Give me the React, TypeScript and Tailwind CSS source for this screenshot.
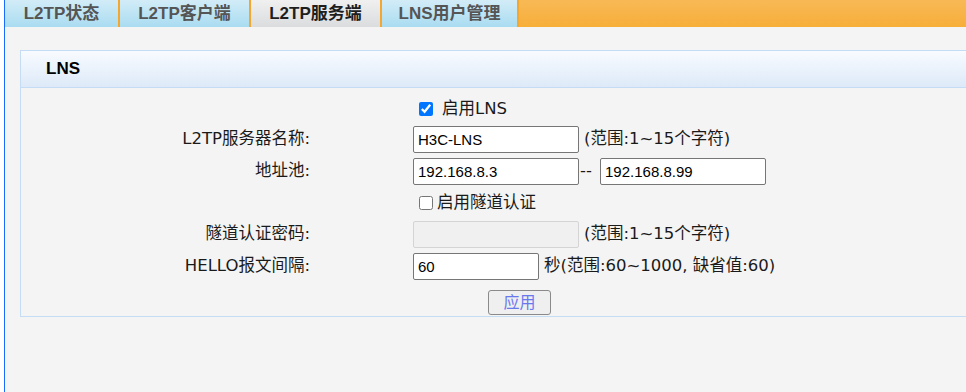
export default function App() {
  const tabs = [
    { label: "L2TP状态", w: "w-[113px]", active: false },
    { label: "L2TP客户端", w: "w-[129px]", active: false },
    { label: "L2TP服务端", w: "w-[129px]", active: true },
    { label: "LNS用户管理", w: "w-[135px]", active: false },
  ]

  const sans = { fontFamily: '"Liberation Sans", "Noto Sans CJK SC", sans-serif' }
  const wide = { fontFamily: '"DejaVu Sans", "Noto Sans CJK SC", sans-serif' }

  return (
    <div className="w-[966px] h-[392px] overflow-hidden bg-white flex" style={sans}>
      <div className="w-[4px] shrink-0 bg-white" />
      <div className="w-[1px] shrink-0 bg-[#1a6cff]" />
      <div className="flex-1 flex flex-col min-w-0">
        {/* tab bar */}
        <div className="h-[27px] flex bg-gradient-to-b from-[#f8b955] to-[#f7ae38]">
          {tabs.map((t) => (
            <div key={t.label} className="flex">
              <div
                className={`${t.w} h-full flex items-center justify-center text-[17px] font-bold ${
                  t.active
                    ? "bg-gradient-to-b from-[#f0f0f0] to-[#dadcde] text-[#1e1e1e]"
                    : "bg-gradient-to-b from-[#d2ecf7] to-[#a9dcf1] text-[#555555]"
                }`}
              >
                {t.label}
              </div>
              <div className="w-[2px] h-full bg-[#f5a62e]" />
            </div>
          ))}
        </div>

        {/* content */}
        <div className="flex-1 bg-[#f4f4f4] pl-[15px] pt-[23px]">
          <div className="w-[980px] border border-[#c5dcf5]">
            <div className="h-[37px] flex items-center pl-[25px] bg-gradient-to-b from-[#f8fbff] to-[#dde9f8] border-b border-[#c5dcf5] text-[17px] font-bold text-black">
              LNS
            </div>
            <div className="pt-[7px] pb-[1px] text-[16.5px] text-[#1a1a1a]" style={wide}>
              {/* enable LNS */}
              <div className="h-[28px] flex items-center">
                <div className="w-[392px]" />
                <input type="checkbox" defaultChecked className="ml-[6px] w-[14px] h-[14px] accent-[#0075ff]" />
                <span className="ml-[9px]">启用LNS</span>
              </div>

              <div className="mt-[3px] h-[27px] flex items-center">
                <div className="w-[289px] text-right">L2TP服务器名称:</div>
                <div className="w-[103px]" />
                <input
                  defaultValue="H3C-LNS"
                  style={sans}
                  className="w-[166px] h-[27px] px-[4px] bg-white border border-[#767676] rounded-[2px] text-[15px] text-black outline-none"
                />
                <span className="ml-[5px]">(范围:1~15个字符)</span>
              </div>

              <div className="mt-[5px] h-[27px] flex items-center">
                <div className="w-[289px] text-right">地址池:</div>
                <div className="w-[103px]" />
                <input
                  defaultValue="192.168.8.3"
                  style={sans}
                  className="w-[166px] h-[27px] px-[4px] bg-white border border-[#767676] rounded-[2px] text-[15px] text-black outline-none"
                />
                <span className="w-[21px] pl-[1px]">--</span>
                <input
                  defaultValue="192.168.8.99"
                  style={sans}
                  className="w-[166px] h-[27px] px-[4px] bg-white border border-[#767676] rounded-[2px] text-[15px] text-black outline-none"
                />
              </div>

              <div className="h-[36px] flex items-center">
                <div className="w-[392px]" />
                <input type="checkbox" className="ml-[6px] w-[14px] h-[14px]" />
                <span className="ml-[4px]">启用隧道认证</span>
              </div>

              <div className="h-[27px] flex items-center">
                <div className="w-[289px] text-right">隧道认证密码:</div>
                <div className="w-[103px]" />
                <input
                  disabled
                  className="w-[166px] h-[27px] px-[4px] bg-[#f0f0f0] border border-[#d4d4d4] rounded-[2px] text-[15px] outline-none"
                />
                <span className="ml-[5px]">(范围:1~15个字符)</span>
              </div>

              <div className="mt-[5px] h-[27px] flex items-center">
                <div className="w-[289px] text-right">HELLO报文间隔:</div>
                <div className="w-[103px]" />
                <input
                  defaultValue="60"
                  style={sans}
                  className="w-[126px] h-[27px] px-[4px] bg-white border border-[#767676] rounded-[2px] text-[15px] text-black outline-none"
                />
                <span className="ml-[5px]">秒(范围:60~1000, 缺省值:60)</span>
              </div>

              <div className="mt-[10px] flex">
                <div className="w-[467px]" />
                <button
                  style={sans}
                  className="w-[63px] h-[25px] bg-[#efefef] border border-[#8a8a8a] rounded-[3px] text-[16px] text-[#6a78ee]"
                >
                  应用
                </button>
              </div>
            </div>
          </div>
        </div>
      </div>
    </div>
  )
}
